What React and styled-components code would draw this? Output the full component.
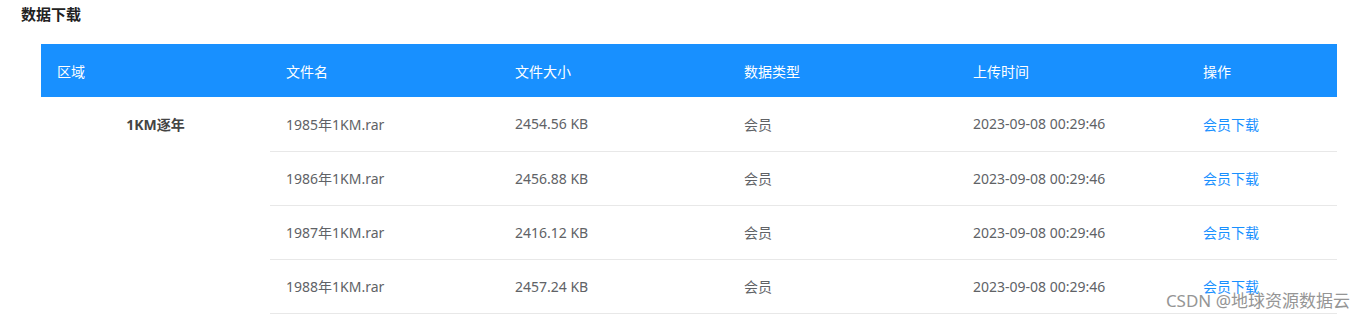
import React from 'react';
import styled, { createGlobalStyle } from 'styled-components';

const Global = createGlobalStyle`
    body {
        margin: 0;
        background: #fff;
        font-family: "Noto Sans", "Noto Sans CJK SC", sans-serif;
    }
`;

const Page = styled.div`
    position: relative;
    height: 317px;
    overflow: hidden;
`;

const Title = styled.div`
    padding: 4px 0 0 21px;
    height: 44px;
    box-sizing: border-box;
    font-size: 15px;
    font-weight: bold;
    color: #222;
    line-height: 20px;
`;

const Table = styled.table`
    margin-left: 41px;
    width: 1296px;
    border-collapse: collapse;
    table-layout: fixed;
    font-size: 14px;
`;

const Head = styled.th`
    width: ${props => props.width}px;
    background: #1890ff;
    color: #fff;
    font-weight: normal;
    text-align: left;
    height: 53px;
    padding: 0 16px;
    box-sizing: border-box;
`;

const Cell = styled.td`
    height: 54px;
    padding: 0 16px;
    box-sizing: border-box;
    color: #606266;
    border-bottom: 1px solid #e8e8e8;
`;

const Region = styled.td`
    vertical-align: top;
    text-align: center;
    padding-top: 17px;
    font-weight: bold;
    color: #444;
`;

const Link = styled.a`
    color: #1890ff;
    text-decoration: none;
    cursor: pointer;
`;

const Mark = styled.div`
    position: absolute;
    right: 16px;
    top: 287px;
    font-size: 17px;
    color: #8a8a8a;
    opacity: 0.9;
`;

const headings = '区域,文件名,文件大小,数据类型,上传时间,操作'.split(',');
const widths = [229, 229, 229, 229, 230, 150];

const rows = [
    { year: 1985, size: '2454.56 KB' },
    { year: 1986, size: '2456.88 KB' },
    { year: 1987, size: '2416.12 KB' },
    { year: 1988, size: '2457.24 KB' },
];

const App = () => (
    <Page>
        <Global />
        <Title>数据下载</Title>
        <Table>
            <thead>
                <tr>
                    {headings.map((h, i) => <Head key={h} width={widths[i]}>{h}</Head>)}
                </tr>
            </thead>
            <tbody>
                {rows.map((row, i) => (
                    <tr key={row.year}>
                        {i === 0 && <Region rowSpan={rows.length}>1KM逐年</Region>}
                        <Cell>{row.year}年1KM.rar</Cell>
                        <Cell>{row.size}</Cell>
                        <Cell>会员</Cell>
                        <Cell>2023-09-08 00:29:46</Cell>
                        <Cell><Link>会员下载</Link></Cell>
                    </tr>
                ))}
            </tbody>
        </Table>
        <Mark>CSDN @地球资源数据云</Mark>
    </Page>
);

export default App;
